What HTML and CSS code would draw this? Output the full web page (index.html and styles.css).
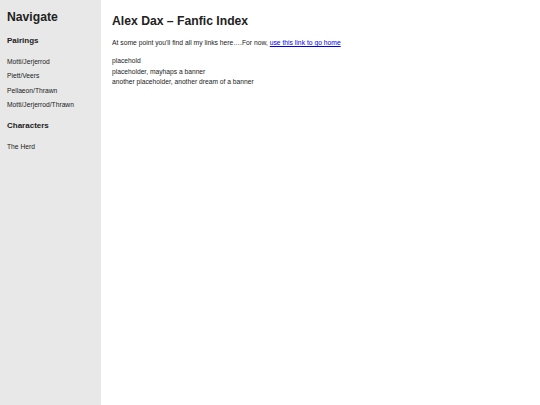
FILE: index.html
```html
<!DOCTYPE html>
<html>
<head>
<meta charset="utf-8">
<link rel="stylesheet" href="styles.css">
</head>
<body>
<div class="layout">
  <nav class="sidebar">
    <h2 class="nav-title">Navigate</h2>
    <h3 class="nav-section">Pairings</h3>
    <ul class="nav-list">
      <li>Motti/Jerjerrod</li>
      <li>Piett/Veers</li>
      <li>Pellaeon/Thrawn</li>
      <li>Motti/Jerjerrod/Thrawn</li>
    </ul>
    <h3 class="nav-section">Characters</h3>
    <ul class="nav-list">
      <li>The Herd</li>
    </ul>
  </nav>
  <main class="content">
    <h1 class="title">Alex Dax – Fanfic Index</h1>
    <p class="intro">At some point you'll find all my links here….For now, <a href="#">use this link to go home</a></p>
    <div class="placeholders">
      <div>placehold</div>
      <div>placeholder, mayhaps a banner</div>
      <div>another placeholder, another dream of a banner</div>
    </div>
  </main>
</div>
</body>
</html>
```

FILE: styles.css
```css
html, body { margin: 0; padding: 0; height: 100%; }
body {
  font-family: "Liberation Sans", Arial, sans-serif;
  color: #222;
  background: #fff;
}
.layout { display: flex; min-height: 405px; }
.sidebar {
  width: 101px;
  flex: none;
  background: #e8e8e8;
  padding: 10px 7px;
  box-sizing: border-box;
}
.nav-title { font-size: 12.2px; font-weight: bold; margin: 0 0 11px; line-height: 14px; }
.nav-section { font-size: 8px; font-weight: bold; margin: 0 0 8px; line-height: 12px; }
.nav-list { list-style: none; margin: 0 0 8px; padding: 0; font-size: 6.7px; }
.nav-list li { line-height: 14.3px; }
.content { padding: 13px 11px; }
.title { font-size: 12.2px; font-weight: bold; margin: 0 0 10px; line-height: 16px; }
.intro { font-size: 6.75px; margin: 0 0 10px; }
.intro a { color: #0000ee; }
.placeholders { font-size: 6.7px; line-height: 10.5px; }
```
